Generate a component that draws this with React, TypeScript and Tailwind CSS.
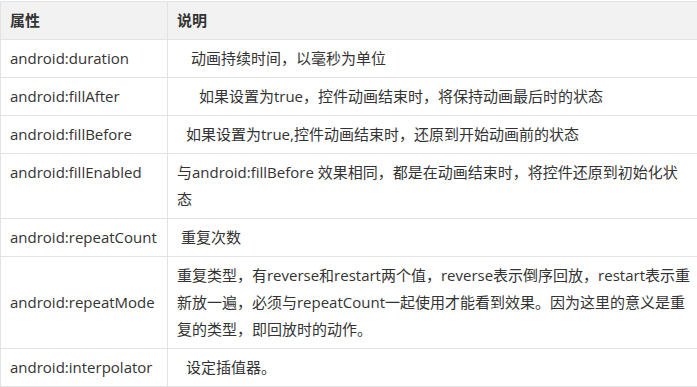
import React from 'react';

type Row = { name: string; desc: React.ReactNode; indent?: string; top?: boolean };

const rows: Row[] = [
    { name: 'android:duration', desc: '动画持续时间，以毫秒为单位', indent: 'pl-[14px]' },
    { name: 'android:fillAfter', desc: '如果设置为true，控件动画结束时，将保持动画最后时的状态', indent: 'pl-[22px]' },
    { name: 'android:fillBefore', desc: '如果设置为true,控件动画结束时，还原到开始动画前的状态', indent: 'pl-[9px]' },
    {
        name: 'android:fillEnabled',
        top: true,
        desc: (
            <>
                与android:fillBefore 效果相同，都是在动画结束时，将控件还原到初始化状
                <br />
                态
            </>
        ),
    },
    { name: 'android:repeatCount', desc: '重复次数', indent: 'pl-[4px]' },
    {
        name: 'android:repeatMode',
        desc: (
            <>
                重复类型，有reverse和restart两个值，reverse表示倒序回放，restart表示重
                <br />
                新放一遍，必须与repeatCount一起使用才能看到效果。因为这里的意义是重
                <br />
                复的类型，即回放时的动作。
            </>
        ),
    },
    { name: 'android:interpolator', desc: '设定插值器。', indent: 'pl-[9px]' },
];

export default function App() {
    return (
        <div className="w-[697px] h-[387px] overflow-hidden bg-white pt-px">
            <table
                className="w-[700px] border-collapse text-[15px] leading-[27px] text-[#333]"
                style={{ fontFamily: '"Open Sans", "Noto Sans CJK SC", sans-serif' }}
            >
                <thead>
                    <tr className="bg-[#f2f2f2]">
                        <th className="w-[168px] border border-[#e3e3e3] px-[9px] py-[5px] text-left font-bold">属性</th>
                        <th className="border border-[#e3e3e3] px-[9px] py-[5px] text-left font-bold">说明</th>
                    </tr>
                </thead>
                <tbody>
                    {rows.map((r) => (
                        <tr key={r.name}>
                            <td className={`border border-[#e3e3e3] px-[9px] py-[5px] whitespace-nowrap ${r.top ? 'align-top' : 'align-middle'}`}>{r.name}</td>
                            <td className="border border-[#e3e3e3] px-[9px] py-[5px] align-middle whitespace-nowrap">
                                <span className={r.indent ?? ''}>{r.desc}</span>
                            </td>
                        </tr>
                    ))}
                </tbody>
            </table>
        </div>
    );
}
